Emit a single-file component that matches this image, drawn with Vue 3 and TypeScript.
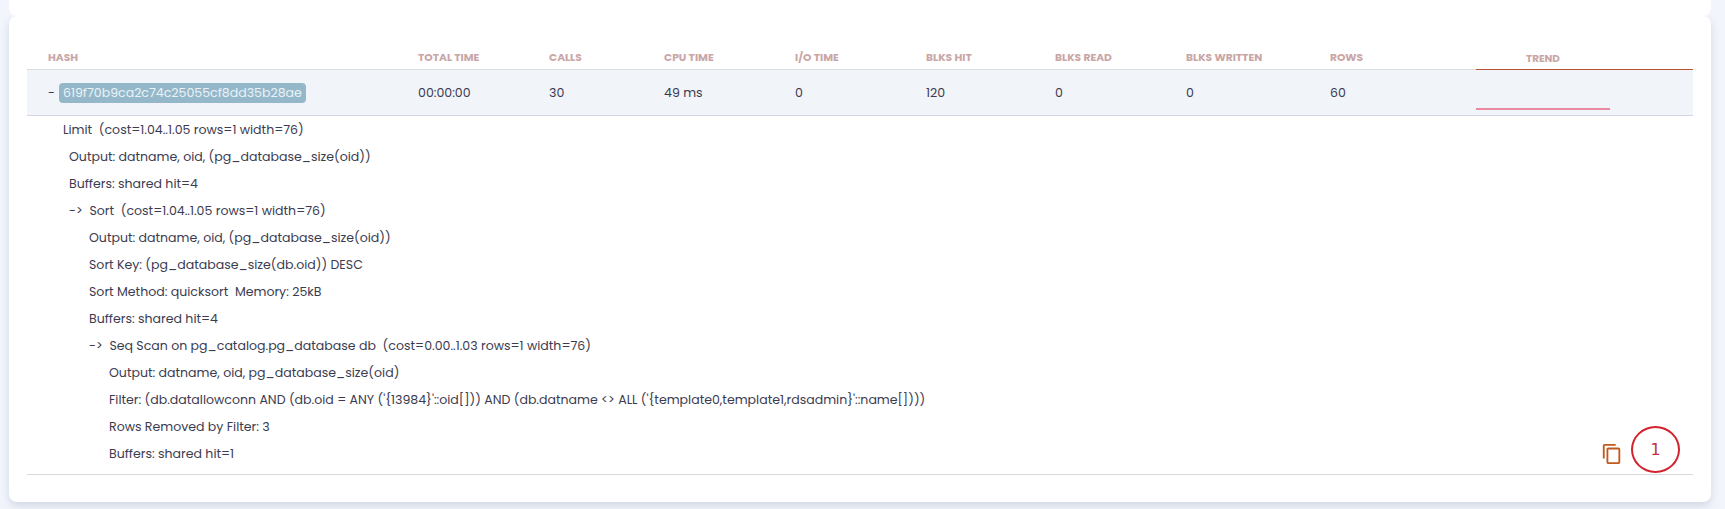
<script setup lang="ts">
interface PlanLine { text: string; level: string }

const headers: string[] = ['Hash', 'Total Time', 'Calls', 'CPU Time', 'I/O Time', 'Blks Hit', 'Blks Read', 'Blks Written', 'Rows']
const values: string[] = ['00:00:00', '30', '49 ms', '0', '120', '0', '0', '60']

const plan: PlanLine[] = [
  { text: 'Limit  (cost=1.04..1.05 rows=1 width=76)', level: 'l0' },
  { text: 'Output: datname, oid, (pg_database_size(oid))', level: 'l1' },
  { text: 'Buffers: shared hit=4', level: 'l1' },
  { text: '->  Sort  (cost=1.04..1.05 rows=1 width=76)', level: 'l1' },
  { text: 'Output: datname, oid, (pg_database_size(oid))', level: 'l2' },
  { text: 'Sort Key: (pg_database_size(db.oid)) DESC', level: 'l2' },
  { text: 'Sort Method: quicksort  Memory: 25kB', level: 'l2' },
  { text: 'Buffers: shared hit=4', level: 'l2' },
  { text: '->  Seq Scan on pg_catalog.pg_database db  (cost=0.00..1.03 rows=1 width=76)', level: 'l2' },
  { text: 'Output: datname, oid, pg_database_size(oid)', level: 'l3' },
  { text: "Filter: (db.datallowconn AND (db.oid = ANY ('{13984}'::oid[])) AND (db.datname <> ALL ('{template0,template1,rdsadmin}'::name[])))", level: 'l3' },
  { text: 'Rows Removed by Filter: 3', level: 'l3' },
  { text: 'Buffers: shared hit=1', level: 'l3' }
]
</script>

<template>
  <div class="page">
    <div class="top-card"></div>
    <section class="card">
      <div class="grid head">
        <div v-for="h in headers" :key="h" class="th">{{ h }}</div>
        <div class="th trend">Trend</div>
      </div>
      <div class="grid row">
        <div class="cell hash-cell">
          <span class="dash">-</span>
          <span class="badge">619f70b9ca2c74c25055cf8dd35b28ae</span>
        </div>
        <div v-for="(v, i) in values" :key="i" class="cell">{{ v }}</div>
        <div class="spark"><span class="spark-line"></span></div>
      </div>
      <div class="detail">
        <div class="plan">
          <div v-for="(line, i) in plan" :key="i" class="line" :class="line.level">{{ line.text }}</div>
        </div>
        <div class="tools">
          <svg class="copy" viewBox="0 0 24 24" width="22" height="22" aria-hidden="true">
            <path d="M16 1H4c-1.1 0-2 .9-2 2v14h2V3h12V1zm3 4H8c-1.1 0-2 .9-2 2v14c0 1.1.9 2 2 2h11c1.1 0 2-.9 2-2V7c0-1.1-.9-2-2-2zm0 16H8V7h11v14z" />
          </svg>
          <span class="mark">1</span>
        </div>
      </div>
    </section>
  </div>
</template>

<style>
html, body { margin: 0; background: #f2f5fb; }
</style>

<style scoped>
.page {
  width: 1725px;
  height: 509px;
  box-sizing: border-box;
  padding: 0 14px 0 9px;
  background: #f2f5fb;
  font-family: Poppins, Inter, "Noto Sans", sans-serif;
  color: #3b3b4f;
  overflow: hidden;
}
.top-card {
  position: relative;
  z-index: 1;
  height: 16px;
  background: #fff;
  border-radius: 0 0 8px 8px;
}
.card {
  height: 486px;
  box-sizing: border-box;
  padding: 0 18px;
  background: #fff;
  border-radius: 8px;
  box-shadow: 0 4px 8px rgba(170, 180, 205, 0.45);
}
.grid {
  display: grid;
  grid-template-columns: 391px 131px 115px 131px 131px 129px 131px 144px 146px 217px;
}
.head {
  height: 53px;
  border-bottom: 1px solid #d9dce3;
}
.th {
  padding: 34px 0 0 24px;
  margin-left: -24px;
  font-size: 10.7px;
  line-height: 15px;
  font-weight: 700;
  text-transform: uppercase;
  color: #c9a6a6;
  white-space: nowrap;
}
.th:first-child { margin-left: 0; padding-left: 21px; }
.th.trend {
  margin-left: 0;
  padding: 35px 0 0 50px;
  font-size: 10.4px;
  border-bottom: 1px solid #b9543a;
  margin-bottom: -1px;
}
.row {
  height: 45px;
  background: #f1f4f9;
  border-bottom: 1px solid #cfd6e4;
}
.cell {
  margin-left: -24px;
  padding-left: 24px;
  font-size: 12.55px;
  line-height: 45px;
  white-space: nowrap;
}
.cell.hash-cell {
  margin-left: 0;
  padding-left: 21px;
  display: flex;
  align-items: center;
  gap: 4px;
}
.dash { line-height: 20px; }
.badge {
  height: 20px;
  padding: 0 4px;
  line-height: 20px;
  border-radius: 4px;
  background: #94b8ca;
  color: #eaf2f6;
}
.spark { position: relative; }
.spark-line {
  position: absolute;
  left: 0;
  top: 38px;
  width: 134px;
  height: 2px;
  background: #ea8aa2;
}
.detail {
  position: relative;
  height: 359px;
  box-sizing: border-box;
  border-bottom: 1px solid #d6d8dd;
}
.plan {
  font-size: 12.55px;
  line-height: 27px;
  white-space: pre;
}
.line { height: 27px; }
.l0 { padding-left: 36px; }
.l1 { padding-left: 42px; }
.l2 { padding-left: 62px; }
.l3 { padding-left: 82px; }
.tools {
  position: absolute;
  left: 0;
  top: 0;
  width: 100%;
  height: 100%;
  pointer-events: none;
}
.copy {
  position: absolute;
  left: 1574px;
  top: 327px;
  fill: #c25a1e;
}
.mark {
  position: absolute;
  left: 1604px;
  top: 310px;
  width: 45px;
  height: 43px;
  border: 2.5px solid #d2232f;
  border-radius: 50%;
  font-family: "DejaVu Sans", sans-serif;
  font-size: 16px;
  line-height: 43px;
  text-align: center;
  color: #c0304a;
}
</style>
